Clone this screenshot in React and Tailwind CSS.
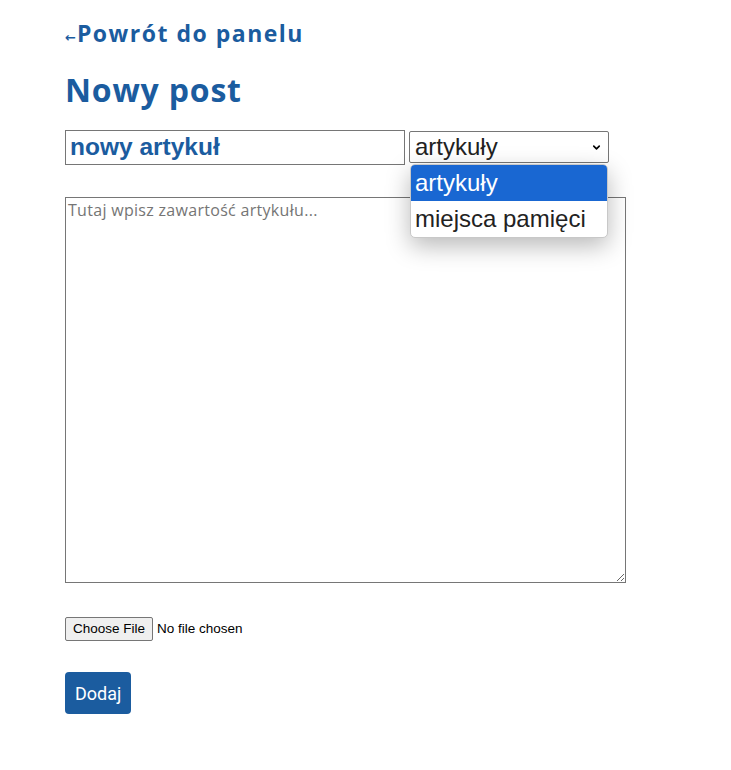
import { ChevronDown } from "lucide-react";

const blue = "text-[#1b5c9f]";

export default function App() {
  return (
    <div className="min-h-[770px] bg-white font-['Open_Sans',sans-serif]">
      <div className="pl-[65px] pt-[18px]">
        <a href="#" className={`block text-[23px] font-bold leading-[30px] tracking-[1.5px] ${blue}`}>
          <span className="mr-[1px] font-['DejaVu_Sans',sans-serif] text-[13px] tracking-normal">←</span>Powrót do panelu
        </a>
        <h1 className={`mt-[17px] text-[32px] font-bold leading-[40px] tracking-[0.8px] ${blue}`}>Nowy post</h1>

        <form className="mt-[20px]" onSubmit={(e) => e.preventDefault()}>
          <div className="flex items-start gap-[4px]">
            <input
              defaultValue="nowy artykuł"
              className="h-[35px] w-[340px] border border-[#767676] px-[4px] font-['Liberation_Sans',sans-serif] text-[24.5px] font-bold text-[#1b5c9f] outline-none"
            />
            <div className="relative mt-[1px]">
              <div className="flex h-[32px] w-[200px] items-center justify-between rounded-[2px] border border-[#767676] pl-[5px] pr-[6px] font-['Liberation_Sans',sans-serif] text-[24px] text-[#222]">
                <span>artykuły</span>
                <ChevronDown className="h-[11px] w-[11px] text-black" strokeWidth={3.5} />
              </div>
              <ul className="absolute left-[1px] top-[33px] z-10 w-[198px] overflow-hidden rounded-[5px] border border-[#c8c8c8] bg-white font-['Liberation_Sans',sans-serif] text-[24px] text-[#222] shadow-[0_8px_24px_rgba(0,0,0,0.28)]">
                <li className="h-[36px] bg-[#1967d2] pl-[4px] leading-[36px] text-white">artykuły</li>
                <li className="h-[36px] pl-[4px] leading-[36px]">miejsca pamięci</li>
              </ul>
            </div>
          </div>

          <textarea
            placeholder="Tutaj wpisz zawartość artykułu..."
            className="mt-[32px] block h-[386px] w-[561px] border border-[#767676] px-[2px] py-[1px] text-[16px] leading-[22px] tracking-[0.3px] outline-none placeholder:text-[#757575]"
          />

          <input
            type="file"
            className="mt-[34px] block font-['Liberation_Sans',sans-serif] text-[13.5px] text-black file:mr-[4px] file:rounded-[2px] file:border file:border-[#767676] file:bg-[#efefef] file:px-[7px] file:py-[1px] file:text-[13.5px]"
          />

          <button
            type="submit"
            className="mt-[31px] block h-[42px] rounded-[4px] bg-[#1b5c9f] px-[10px] font-['Roboto',sans-serif] text-[18px] text-white"
          >
            Dodaj
          </button>
        </form>
      </div>
    </div>
  );
}
